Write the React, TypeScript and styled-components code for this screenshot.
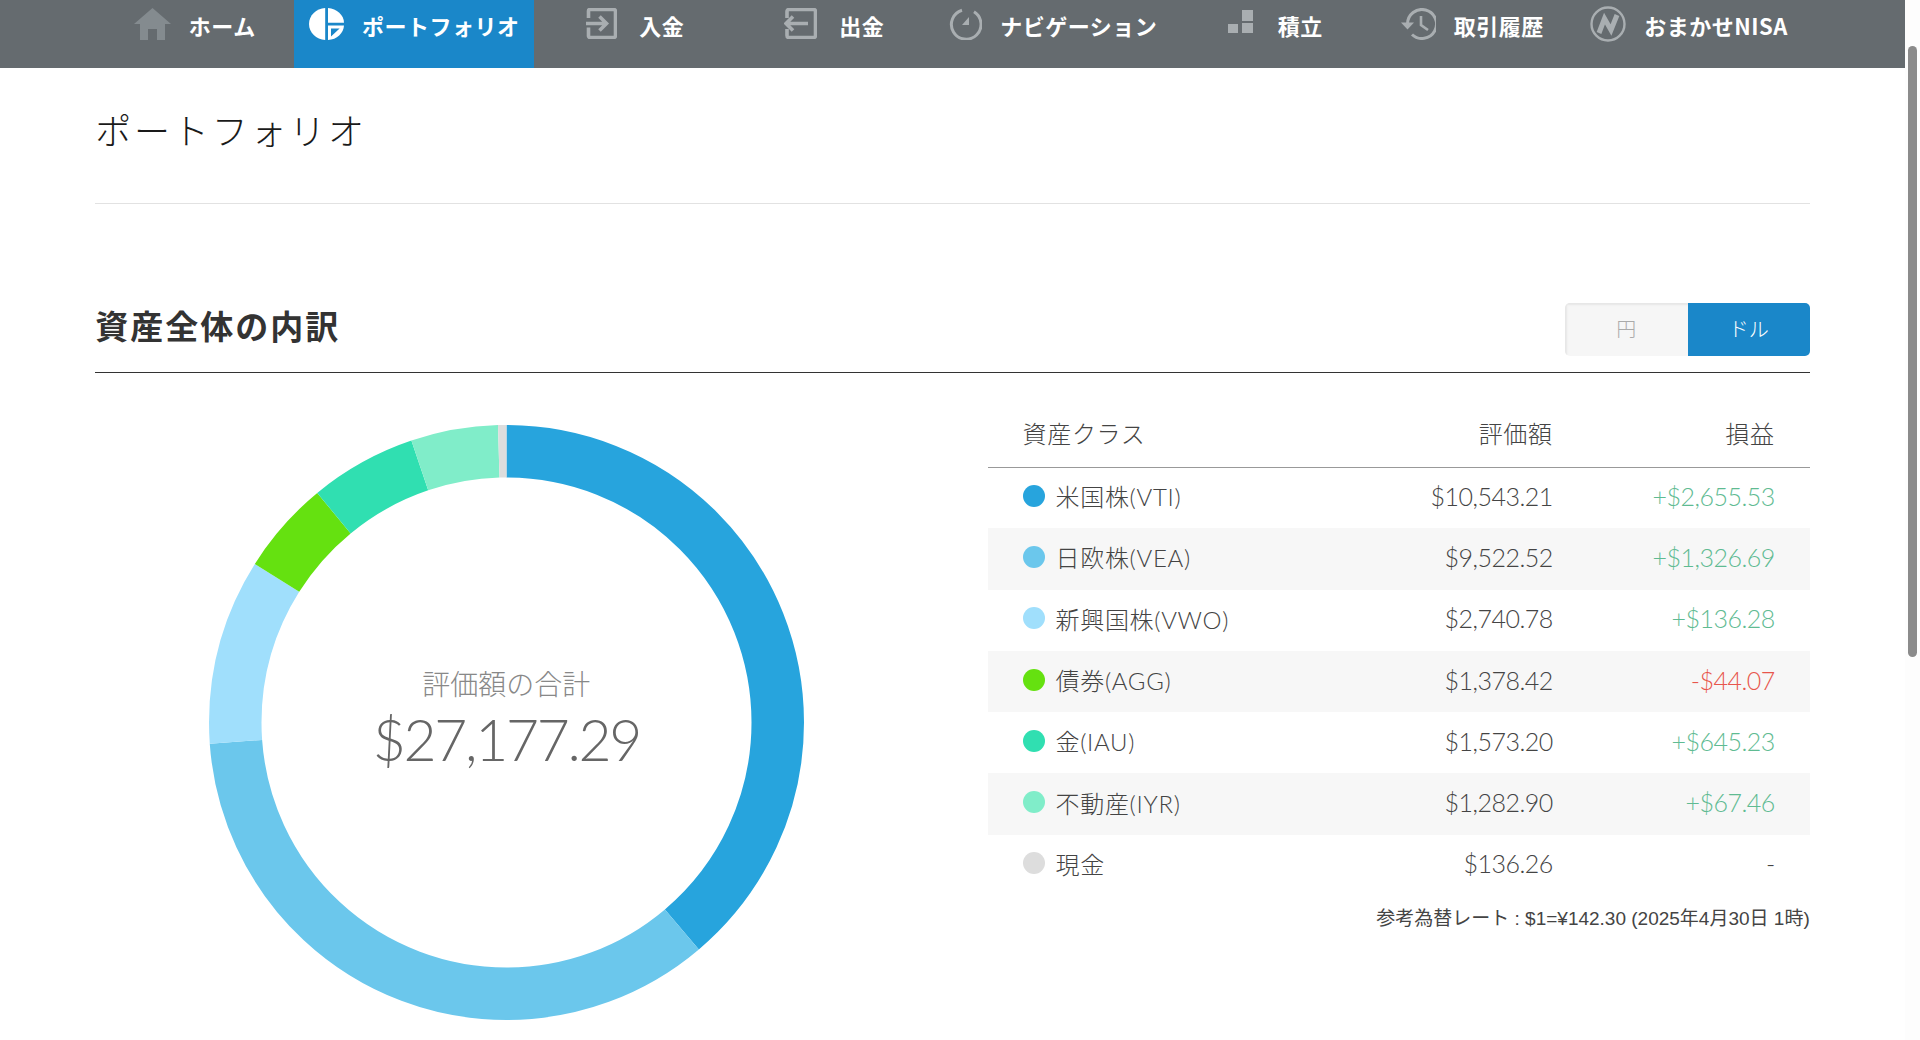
import React from "react";
import styled, { createGlobalStyle } from "styled-components";

const JP = `"Noto Sans CJK JP", sans-serif`;
const THIN = `Lato, "Noto Sans CJK JP", sans-serif`;

const GlobalStyle = createGlobalStyle`
	html, body {
		margin: 0;
		height: 1040px;
		overflow: hidden;
		background: #fff;
		font-family: ${JP};
	}
`;

const Shell = styled.div`
	display: flex;
	height: 1040px;
`;

const Page = styled.div`
	flex: 1;
	min-width: 0;
`;

const ScrollTrack = styled.div`
	width: 15px;
	background: #fdfdfd;
	padding: 46px 3px 0;
	box-sizing: border-box;
`;

const ScrollThumb = styled.div`
	height: 611px;
	border-radius: 5px;
	background: #8b8b8b;
`;

const NavBar = styled.nav`
	height: 68px;
	background: #656b6f;
`;

const NavInner = styled.div`
	width: 90%;
	height: 100%;
	margin: 0 auto;
	display: grid;
	grid-template-columns: 199px 240px 202px 196px 242px 202px 192px 1fr;
`;

const NavItem = styled.a<{ $active?: boolean; $gap?: number }>`
	display: flex;
	justify-content: center;
	align-items: flex-start;
	gap: ${(props) => props.$gap ?? 18}px;
	padding-top: 8px;
	background: ${(props) => (props.$active ? "#1a87c9" : "transparent")};
	color: #fff;
	font-size: 22px;
	font-weight: 700;
	letter-spacing: 0.5px;
	white-space: nowrap;
`;

const NavLabel = styled.span`
	line-height: 32px;
	margin-top: 1px;
`;

const Content = styled.main`
	width: 90%;
	margin: 0 auto;
`;

const PageTitle = styled.h1`
	margin: 0;
	padding: 37px 0 50px;
	font-size: 36px;
	line-height: 48px;
	font-weight: 300;
	letter-spacing: 2.8px;
	color: #1a1a1a;
	border-bottom: 1px solid #e2e2e2;
`;

const SectionHead = styled.div`
	display: flex;
	justify-content: space-between;
	align-items: center;
	margin-top: 99px;
	padding-bottom: 16px;
	border-bottom: 1px solid #333;
`;

const SectionTitle = styled.h2`
	margin: 0 0 9px;
	font-size: 33px;
	line-height: 42px;
	font-weight: 700;
	letter-spacing: 2px;
	color: #333;
`;

const Toggle = styled.div`
	display: grid;
	grid-template-columns: 123px 122px;
	height: 53px;
	border-radius: 5px;
	overflow: hidden;
`;

const ToggleButton = styled.button<{ $on?: boolean }>`
	border: 0;
	padding: 0 0 3px;
	font-family: ${JP};
	font-size: 20px;
	font-weight: 300;
	color: ${(props) => (props.$on ? "#fff" : "#aaa")};
	background: ${(props) => (props.$on ? "#1a87c9" : "#f6f6f6")};
	box-shadow: ${(props) => (props.$on ? "none" : "inset 2px 2px 2px #e6e6e6")};
`;

const Columns = styled.div`
	display: grid;
	grid-template-columns: 1fr 1fr;
	column-gap: 70px;
`;

const ChartWrap = styled.div`
	position: relative;
	justify-self: center;
	width: 595px;
	height: 595px;
	margin-top: 52px;
`;

const ChartCenter = styled.div`
	position: absolute;
	inset: 0;
	display: flex;
	flex-direction: column;
	align-items: center;
	justify-content: center;
`;

const TotalLabel = styled.div`
	font-family: ${THIN};
	font-size: 28px;
	line-height: 38px;
	font-weight: 300;
	color: #888;
	margin-bottom: 1px;
`;

const TotalValue = styled.div`
	font-family: ${THIN};
	font-size: 57px;
	line-height: 70px;
	font-weight: 300;
	letter-spacing: -2.3px;
	color: #666;
	margin-bottom: 6px;
`;

const Table = styled.table`
	width: 100%;
	border-collapse: collapse;
	table-layout: fixed;
	font-family: ${THIN};
	font-size: 24px;
	font-weight: 300;
	color: #444;
`;

const HeadCell = styled.th<{ $right?: boolean; $width?: number }>`
	height: 94px;
	padding: 25px 35px 0;
	box-sizing: border-box;
	border-bottom: 1px solid #999;
	font-weight: 300;
	letter-spacing: 0.7px;
	text-align: ${(props) => (props.$right ? "right" : "left")};
	width: ${(props) => (props.$width ? `${props.$width}px` : "auto")};
`;

const Row = styled.tr<{ $striped?: boolean }>`
	height: 61.3px;
	background: ${(props) => (props.$striped ? "#f7f7f7" : "#fff")};
`;

const NameCell = styled.td`
	padding: 0 35px 4px;
	white-space: nowrap;
	letter-spacing: 0.7px;
`;

const NameInner = styled.div`
	display: flex;
	align-items: center;
	gap: 11px;
`;

const Dot = styled.span<{ $color: string }>`
	width: 22px;
	height: 22px;
	border-radius: 50%;
	background: ${(props) => props.$color};
`;

const NumCell = styled.td<{ $tone?: "up" | "down" }>`
	padding: 0 35px 4px;
	text-align: right;
	white-space: nowrap;
	font-size: 25px;
	letter-spacing: -0.5px;
	color: ${(props) =>
		props.$tone === "up" ? "#5fbb92" : props.$tone === "down" ? "#e8564c" : "#444"};
`;

const RateNote = styled.p`
	margin: 12px 0 0;
	text-align: right;
	font-family: "Liberation Sans", "Noto Sans CJK JP", sans-serif;
	font-size: 19px;
	line-height: 22px;
	color: #444;
`;

const ICON = "#a9aeb1";

const HomeIcon = () => (
	<svg width="37" height="32" viewBox="0 0 37 32">
		<path d="M18.5 0 37 16h-6v16h-8V21h-9v11H6V16H0z" fill="#848b8f" />
	</svg>
);

const PortfolioIcon = () => (
	<svg width="35" height="32" viewBox="0 0 35 32">
		<path d="M16.2 0v32C7.2 31.6 0 24.6 0 16S7.2.4 16.2 0z" fill="#fff" />
		<path d="M19 0c8.8.6 16 7.2 16 14.8H19z" fill="#fff" />
		<path fillRule="evenodd" d="M19 17.4h16C34.6 25 28 31.4 19 32zM22 20.4v8.2l8.6-8.2z" fill="#fff" />
	</svg>
);

const EnterIcon = () => (
	<svg width="31" height="31" viewBox="0 0 31 31" fill="none" stroke={ICON} strokeWidth="3.6">
		<path d="M2.5 10V3a1.5 1.5 0 0 1 1.5-1.5h23.500a2 2 0 0 1 2 2v24a2 2 0 0 1-2 2H4a1.500 1.500 0 0 1-1.500-1.500v-8.500" />
		<path d="M0 15.5h20M13.500 8.500l7 7-7 7" />
	</svg>
);

const ExitIcon = () => (
	<svg width="33" height="31" viewBox="0 0 33 31" fill="none" stroke={ICON} strokeWidth="3.6">
		<path d="M3 10V3.500a2 2 0 0 1 2-2h24.500a2 2 0 0 1 2 2v24a2 2 0 0 1-2 2H5a2 2 0 0 1-2-2V21" />
		<path d="M24 15.5H2M9 8.500l-7 7 7 7" />
	</svg>
);

const NaviIcon = () => (
	<svg width="33" height="32" viewBox="0 0 33 32" fill="none">
		<path d="M13 2.200A14.800 14.800 0 1 0 25 3.800" stroke={ICON} strokeWidth="3" />
		<path d="M20 9v8h-7z" fill={ICON} />
	</svg>
);

const BlocksIcon = () => (
	<svg width="26" height="32" viewBox="0 0 26 32">
		<rect x="0" y="16" width="10" height="9" fill={ICON} />
		<rect x="14" y="15" width="11" height="10" fill={ICON} />
		<rect x="14" y="2" width="11" height="11" fill={ICON} />
	</svg>
);

const HistoryIcon = () => (
	<svg width="35" height="32" viewBox="0 0 35 32" fill="none">
		<path d="M6.500 16A14.500 14.500 0 1 1 11 26.500" stroke={ICON} strokeWidth="3" />
		<path d="M0 14.500h13l-6.500 7z" fill={ICON} />
		<path d="M20 8v9l7 5" stroke={ICON} strokeWidth="2.600" />
	</svg>
);

const NisaIcon = () => (
	<svg width="36" height="36" viewBox="0 0 36 36" fill="none" style={{ marginTop: -2 }}>
		<circle cx="18" cy="18" r="16.500" stroke={ICON} strokeWidth="2.400" />
		<path d="M9 27 14.500 12.500 21 24 27 9" stroke={ICON} strokeWidth="5" strokeLinejoin="miter" />
	</svg>
);

const tabs = [
	{ label: "ホーム", icon: <HomeIcon /> },
	{ label: "ポートフォリオ", icon: <PortfolioIcon />, active: true },
	{ label: "入金", icon: <EnterIcon />, gap: 22 },
	{ label: "出金", icon: <ExitIcon />, gap: 22 },
	{ label: "ナビゲーション", icon: <NaviIcon /> },
	{ label: "積立", icon: <BlocksIcon />, gap: 24 },
	{ label: "取引履歴", icon: <HistoryIcon /> },
	{ label: "おまかせNISA", icon: <NisaIcon /> },
];

const assets = [
	{ name: "米国株(VTI)", value: 10543.21, profit: "+$2,655.53", tone: "up", color: "#27a4dd" },
	{ name: "日欧株(VEA)", value: 9522.52, profit: "+$1,326.69", tone: "up", color: "#6bc7ec" },
	{ name: "新興国株(VWO)", value: 2740.78, profit: "+$136.28", tone: "up", color: "#a0dffc" },
	{ name: "債券(AGG)", value: 1378.42, profit: "-$44.07", tone: "down", color: "#65e110" },
	{ name: "金(IAU)", value: 1573.2, profit: "+$645.23", tone: "up", color: "#30dfb1" },
	{ name: "不動産(IYR)", value: 1282.9, profit: "+$67.46", tone: "up", color: "#80edc9" },
	{ name: "現金", value: 136.26, profit: "-", color: "#dddddd" },
] as const;

const money = (n: number) =>
	"$" + n.toLocaleString("en-US", { minimumFractionDigits: 2, maximumFractionDigits: 2 });

function Donut() {
	const total = assets.reduce((sum, a) => sum + a.value, 0);
	const r = 271.25;
	const c = 2 * Math.PI * r;
	let offset = 0;
	return (
		<svg width="595" height="595" viewBox="0 0 595 595">
			<g transform="rotate(-90 297.5 297.5)" fill="none" strokeWidth="52.5">
				{assets.map((a) => {
					const len = (a.value / total) * c;
					const seg = (
						<circle
							key={a.name}
							cx="297.5"
							cy="297.5"
							r={r}
							stroke={a.color}
							strokeDasharray={`${len} ${c - len}`}
							strokeDashoffset={-offset}
						/>
					);
					offset += len;
					return seg;
				})}
			</g>
		</svg>
	);
}

export default function App() {
	return (
		<Shell>
			<GlobalStyle />
			<Page>
				<NavBar>
					<NavInner>
						{tabs.map((t) => (
							<NavItem key={t.label} $active={t.active} $gap={t.gap}>
								{t.icon}
								<NavLabel>{t.label}</NavLabel>
							</NavItem>
						))}
					</NavInner>
				</NavBar>
				<Content>
					<PageTitle>ポートフォリオ</PageTitle>
					<SectionHead>
						<SectionTitle>資産全体の内訳</SectionTitle>
						<Toggle>
							<ToggleButton>円</ToggleButton>
							<ToggleButton $on>ドル</ToggleButton>
						</Toggle>
					</SectionHead>
					<Columns>
						<ChartWrap>
							<Donut />
							<ChartCenter>
								<TotalLabel>評価額の合計</TotalLabel>
								<TotalValue>$27,177.29</TotalValue>
							</ChartCenter>
						</ChartWrap>
						<div>
							<Table>
								<thead>
									<tr>
										<HeadCell>資産クラス</HeadCell>
										<HeadCell $right $width={222}>
											評価額
										</HeadCell>
										<HeadCell $right $width={222}>
											損益
										</HeadCell>
									</tr>
								</thead>
								<tbody>
									{assets.map((a, i) => (
										<Row key={a.name} $striped={i % 2 === 1}>
											<NameCell>
												<NameInner>
													<Dot $color={a.color} />
													{a.name}
												</NameInner>
											</NameCell>
											<NumCell>{money(a.value)}</NumCell>
											<NumCell $tone={"tone" in a ? a.tone : undefined}>{a.profit}</NumCell>
										</Row>
									))}
								</tbody>
							</Table>
							<RateNote>参考為替レート : $1=¥142.30 (2025年4月30日 1時)</RateNote>
						</div>
					</Columns>
				</Content>
			</Page>
			<ScrollTrack>
				<ScrollThumb />
			</ScrollTrack>
		</Shell>
	);
}
